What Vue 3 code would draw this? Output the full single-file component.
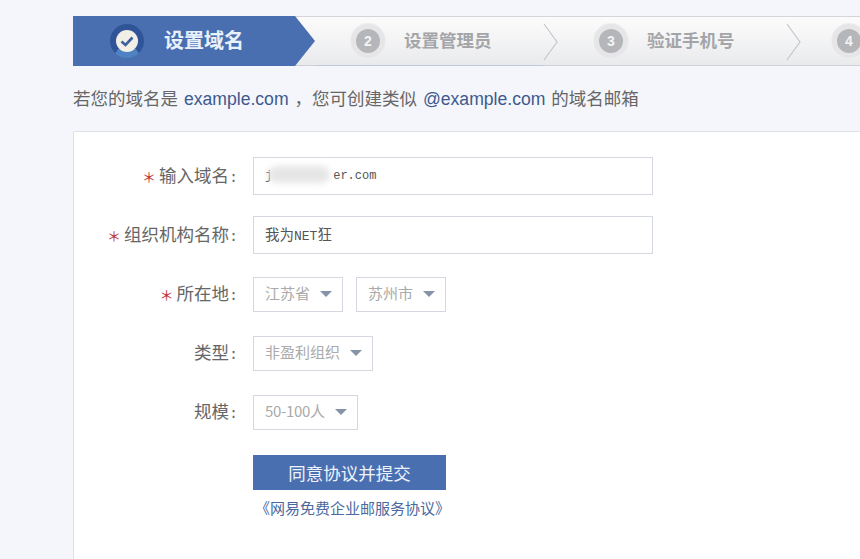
<template>
  <div class="page">
    <div class="steps">
      <div class="step active">
        <span class="badge">
          <svg width="20" height="20" viewBox="0 0 20 20">
            <path d="M4.5 10.5 L8.5 14 L15.5 6.5" fill="none" stroke="#3f5f9f" stroke-width="2.6" />
          </svg>
        </span>
        <span class="step-name">设置域名</span>
      </div>
      <div v-for="step in steps" :key="step.num" class="step">
        <span class="num"><b>{{ step.num }}</b></span>
        <span v-if="step.name" class="step-name">{{ step.name }}</span>
        <svg v-if="step.name" class="chevron" width="16" height="38" viewBox="0 0 16 38">
          <path d="M1 1 L14 19 L1 37" fill="none" stroke="#c4c6ca" stroke-width="1.2" />
        </svg>
      </div>
    </div>

    <p class="hint">
      若您的域名是 <a>example.com</a> ，您可创建类似 <a>@example.com</a> 的域名邮箱
    </p>

    <div class="panel">
      <div class="row">
        <label class="label"><i>＊</i>输入域名<b>:</b></label>
        <div class="input domain">
          <span>j</span>
          <span class="smudge"></span>
          <span class="tail">er.com</span>
        </div>
      </div>
      <div class="row">
        <label class="label"><i>＊</i>组织机构名称<b>:</b></label>
        <div class="input org"><span>我为<span class="mono">NET</span>狂</span></div>
      </div>
      <div class="row">
        <label class="label"><i>＊</i>所在地<b>:</b></label>
        <div class="selects">
          <div class="select">江苏省<em></em></div>
          <div class="select">苏州市<em></em></div>
        </div>
      </div>
      <div class="row">
        <label class="label">类型<b>:</b></label>
        <div class="select">非盈利组织<em></em></div>
      </div>
      <div class="row">
        <label class="label">规模<b>:</b></label>
        <div class="select narrow">50-100人<em></em></div>
      </div>
      <div class="actions">
        <button class="submit">同意协议并提交</button>
        <a class="terms">《网易免费企业邮服务协议》</a>
      </div>
    </div>
  </div>
</template>

<script setup>
const steps = [
  { num: 2, name: '设置管理员' },
  { num: 3, name: '验证手机号' },
  { num: 4 }
]
</script>

<style>
html, body {
  margin: 0;
  height: 100%;
  overflow: hidden;
  background: #f4f6fb;
}
</style>

<style scoped>
.page {
  padding: 16px 0 0 73px;
  width: 787px;
  height: 543px;
  overflow: hidden;
  font-family: "Noto Sans CJK SC", "Liberation Sans", sans-serif;
  color: #666;
}

.steps {
  display: flex;
  width: 1000px;
  height: 50px;
  box-sizing: border-box;
  border-top: 1px solid #d3d5db;
  border-bottom: 1px solid #cfd1d6;
  background: linear-gradient(#fbfbfc, #f7f7f8 30%, #e9eaec);
}

.step {
  position: relative;
  flex: none;
  width: 243px;
  height: 48px;
  display: flex;
  align-items: center;
  box-sizing: border-box;
  padding-left: 36px;
}

.step:nth-child(2)::after {
  content: "";
  position: absolute;
  left: 0;
  bottom: -1px;
  width: 228px;
  height: 1px;
  background: #bcc8dc;
}

.step:last-child {
  padding-left: 31px;
}

.step.active {
  width: 242px;
  height: 50px;
  margin-top: -1px;
  padding-left: 37px;
  background: #4a6fb0;
  clip-path: polygon(0 0, 222px 0, 242px 50%, 222px 100%, 0 100%);
  color: #eef3fb;
}

.badge {
  width: 22px;
  height: 22px;
  border-radius: 50%;
  background: #f1efe6;
  border: 6px solid #2f5598;
  border-bottom-color: #4f82c2;
  display: flex;
  align-items: center;
  justify-content: center;
}

.active .step-name {
  margin-left: 20px;
  font-size: 20px;
  font-weight: 700;
  color: #e9f1fb;
}

.num {
  width: 24px;
  height: 24px;
  border-radius: 50%;
  background: #b5b6b9;
  border: 5px solid #e6e6e8;
  box-shadow: 0 0 0 1px #eeeeef;
  display: flex;
  align-items: center;
  justify-content: center;
  color: #f4f4f4;
  font: 700 14px "Liberation Sans", sans-serif;
}

.step-name {
  margin-left: 19px;
  margin-bottom: 3px;
  font-size: 17.5px;
  font-weight: 700;
  color: #a4a5a8;
}

.chevron {
  position: absolute;
  left: 228px;
  top: 6px;
}

.hint {
  margin: 0;
  height: 65px;
  line-height: 63px;
  font-size: 17.5px;
  color: #666;
  white-space: nowrap;
}

.hint a {
  margin: 0 2px;
  color: #3e5a8e;
  font-family: "Liberation Sans", sans-serif;
  font-size: 17.6px;
}

.panel {
  height: 428px;
  box-sizing: border-box;
  padding-top: 25px;
  background: #fff;
  border: 1px solid #dfe1e7;
  border-right: 0;
  border-bottom: 0;
}

.row {
  display: flex;
  align-items: center;
  height: 38px;
  margin-bottom: 21px;
}

.label {
  flex: none;
  width: 164px;
  margin-right: 15px;
  padding-bottom: 3px;
  text-align: right;
  font-size: 17.5px;
  color: #666;
  white-space: nowrap;
}

.label i {
  margin-right: 3px;
  color: #c0303a;
  font-size: 14px;
  font-style: normal;
}

.label b {
  font: 15px "Liberation Mono", monospace;
}

.input {
  position: relative;
  width: 400px;
  height: 38px;
  box-sizing: border-box;
  padding-left: 11px;
  display: flex;
  align-items: center;
  border: 1px solid #d5d8e0;
  background: #fff;
  font-size: 14.5px;
  color: #555;
}

.org {
  padding-bottom: 3px;
}

.domain {
  font: 12px "Liberation Mono", monospace;
}

.tail {
  margin-left: 61px;
}

.smudge {
  position: absolute;
  left: 14px;
  top: 8px;
  width: 62px;
  height: 17px;
  border-radius: 9px;
  background: #e6e6e7;
  filter: blur(3px);
}

.mono {
  font: 13px "Liberation Mono", monospace;
}

.selects {
  display: flex;
  gap: 13px;
}

.select {
  height: 35px;
  box-sizing: border-box;
  padding: 0 10px 3px 11px;
  display: flex;
  align-items: center;
  border: 1px solid #d5d8e0;
  background: #fff;
  font-size: 15px;
  color: #aaa;
}

.select.narrow {
  letter-spacing: -0.3px;
}

.select em {
  width: 0;
  height: 0;
  margin: 3px 0 0 10px;
  border-left: 6.5px solid transparent;
  border-right: 6.5px solid transparent;
  border-top: 6px solid #8593a8;
}

.actions {
  margin: 24px 0 0 179px;
  width: 193px;
}

.submit {
  display: block;
  width: 193px;
  height: 35px;
  padding: 0;
  border: 0;
  background: #4a6fb0;
  color: #eef3fb;
  font-family: inherit;
  font-size: 17.5px;
}

.terms {
  display: block;
  width: 195px;
  margin: 7px 0 0 2px;
  text-align: center;
  font-size: 15px;
  color: #4a6a9e;
  white-space: nowrap;
}
</style>
